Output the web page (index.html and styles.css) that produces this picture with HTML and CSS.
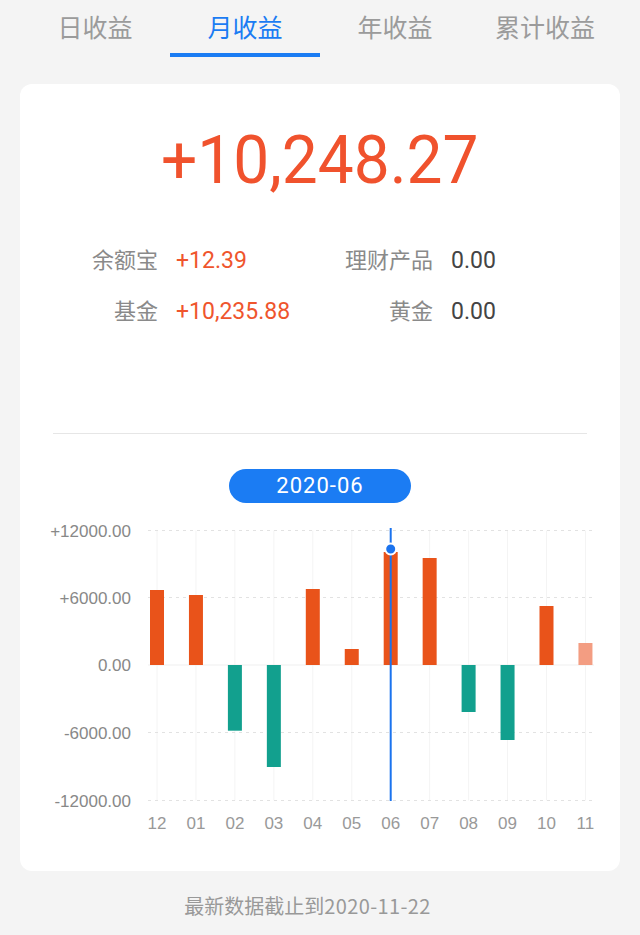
FILE: index.html
```html
<!DOCTYPE html>
<html lang="zh-CN">
<head>
<meta charset="utf-8">
<title>收益</title>
<link rel="stylesheet" href="styles.css">
</head>
<body>
<nav class="tabs">
  <div class="tab">日收益</div>
  <div class="tab active">月收益</div>
  <div class="tab">年收益</div>
  <div class="tab">累计收益</div>
</nav>
<main class="card">
  <div class="total"><span class="total-num">+10,248.27</span></div>
  <div class="details">
    <span class="label">余额宝</span><span class="value up">+12.39</span>
    <span class="label">理财产品</span><span class="value">0.00</span>
    <span class="label">基金</span><span class="value up">+10,235.88</span>
    <span class="label">黄金</span><span class="value">0.00</span>
  </div>
  <div class="divider"></div>
  <div class="pill-wrap"><div class="pill">2020-06</div></div>
  <svg class="chart" width="600" height="320" viewBox="0 0 600 320">
    <g class="vgrid">
      <line x1="137" y1="15.5" x2="137" y2="285.5"/>
      <line x1="175.95" y1="15.5" x2="175.95" y2="285.5"/>
      <line x1="214.9" y1="15.5" x2="214.9" y2="285.5"/>
      <line x1="253.85" y1="15.5" x2="253.85" y2="285.5"/>
      <line x1="292.8" y1="15.5" x2="292.8" y2="285.5"/>
      <line x1="331.75" y1="15.5" x2="331.75" y2="285.5"/>
      <line x1="409.65" y1="15.5" x2="409.65" y2="285.5"/>
      <line x1="448.6" y1="15.5" x2="448.6" y2="285.5"/>
      <line x1="487.55" y1="15.5" x2="487.55" y2="285.5"/>
      <line x1="526.5" y1="15.5" x2="526.5" y2="285.5"/>
      <line x1="565.45" y1="15.5" x2="565.45" y2="285.5"/>
    </g>
    <g class="hgrid">
      <line x1="128" y1="15.5" x2="574" y2="15.5"/>
      <line x1="128" y1="82.5" x2="574" y2="82.5"/>
      <line x1="128" y1="217.5" x2="574" y2="217.5"/>
      <line x1="128" y1="285.5" x2="574" y2="285.5"/>
    </g>
    <line class="zero" x1="128" y1="150" x2="574" y2="150"/>
    <g class="ylabels">
      <text x="111" y="21.5">+12000.00</text>
      <text x="111" y="88.5">+6000.00</text>
      <text x="111" y="156">0.00</text>
      <text x="111" y="223.5">-6000.00</text>
      <text x="111" y="291.5">-12000.00</text>
    </g>
    <g class="bars">
      <rect class="pos" x="130" y="75" width="14" height="75"/>
      <rect class="pos" x="168.95" y="80" width="14" height="70"/>
      <rect class="neg" x="207.9" y="150" width="14" height="65.7"/>
      <rect class="neg" x="246.85" y="150" width="14" height="102"/>
      <rect class="pos" x="285.8" y="74" width="14" height="76"/>
      <rect class="pos" x="324.75" y="134" width="14" height="16"/>
      <rect class="pos" x="363.7" y="37" width="14" height="113"/>
      <rect class="pos" x="402.65" y="43" width="14" height="107"/>
      <rect class="neg" x="441.6" y="150" width="14" height="47"/>
      <rect class="neg" x="480.55" y="150" width="14" height="75"/>
      <rect class="pos" x="519.5" y="91" width="14" height="59"/>
      <rect class="future" x="558.45" y="128" width="14" height="22"/>
    </g>
    <line class="cursor" x1="370.7" y1="13" x2="370.7" y2="286"/>
    <circle class="cursor-dot" cx="370.7" cy="34" r="5.5"/>
    <g class="xlabels">
      <text x="137" y="314">12</text>
      <text x="175.95" y="314">01</text>
      <text x="214.9" y="314">02</text>
      <text x="253.85" y="314">03</text>
      <text x="292.8" y="314">04</text>
      <text x="331.75" y="314">05</text>
      <text x="370.7" y="314">06</text>
      <text x="409.65" y="314">07</text>
      <text x="448.6" y="314">08</text>
      <text x="487.55" y="314">09</text>
      <text x="526.5" y="314">10</text>
      <text x="565.45" y="314">11</text>
    </g>
  </svg>
</main>
<footer class="footer">最新数据截止到<span class="footer-date">2020-11-22</span></footer>
</body>
</html>
```
FILE: styles.css
```css
* { box-sizing: border-box; }
html, body {
  margin: 0;
  padding: 0;
}
body {
  width: 640px;
  height: 935px;
  background: #f4f4f4;
  font-family: "Noto Sans CJK SC", "Noto Sans", sans-serif;
  overflow: hidden;
}
.tabs {
  display: flex;
  padding: 0 20px;
  margin-bottom: 27px;
}
.tab {
  width: 150px;
  height: 57px;
  display: flex;
  flex-direction: column;
  align-items: center;
  padding-top: 13px;
  font-size: 25px;
  line-height: 27px;
  color: #9b9b9b;
}
.tab::after {
  content: "";
  margin-top: auto;
  width: 100%;
  height: 4px;
  background: transparent;
}
.tab.active { color: #1b7cf3; }
.tab.active::after { background: #1b7cf3; }

.card {
  margin: 0 20px;
  height: 787px;
  background: #fff;
  border-radius: 12px;
  padding-top: 44px;
}
.total {
  height: 66px;
  text-align: center;
  font-family: Roboto, "Liberation Sans", sans-serif;
  font-size: 66px;
  line-height: 66px;
  color: #f0522d;
}
.total-num {
  display: inline-block;
  transform: scaleX(0.97);
}
.details {
  margin-top: 48px;
  display: grid;
  grid-template-columns: 138px 130px 109px auto;
  column-gap: 18px;
  row-gap: 16px;
  align-items: baseline;
  line-height: 32px;
}
.label {
  text-align: right;
  font-size: 22px;
  color: #8a8a8a;
}
.value {
  font-family: Roboto, "Liberation Sans", sans-serif;
  font-size: 23px;
  color: #444;
}
.value.up { color: #ef552d; }

.divider {
  margin: 105px 33px 0;
  height: 1px;
  background: #e6e6e6;
}
.pill-wrap {
  margin-top: 35px;
  display: flex;
  justify-content: center;
}
.pill {
  width: 182px;
  height: 34px;
  border-radius: 17px;
  background: #1b7cf3;
  color: #fff;
  font-family: Roboto, "Liberation Sans", sans-serif;
  font-size: 22px;
  letter-spacing: 1px;
  line-height: 34px;
  text-align: center;
}
.chart {
  display: block;
  margin-top: 12px;
}
.vgrid line { stroke: #f4f4f4; stroke-width: 1; }
.hgrid line { stroke: #e2e2e2; stroke-width: 1; stroke-dasharray: 3 4; }
.zero { stroke: #efefef; stroke-width: 1; }
.ylabels text {
  font-family: "Liberation Sans", Arial, sans-serif;
  font-size: 17px;
  fill: #888;
  text-anchor: end;
}
.xlabels text {
  font-family: "Liberation Sans", Arial, sans-serif;
  font-size: 17px;
  fill: #999;
  text-anchor: middle;
}
.bars .pos { fill: #e9531a; }
.bars .neg { fill: #12a08e; }
.bars .future { fill: #f39d82; }
.cursor { stroke: #1b73ee; stroke-width: 2; }
.cursor-dot { fill: #1b73ee; stroke: #fff; stroke-width: 2; }

.footer {
  margin-top: 20px;
  padding-right: 25px;
  text-align: center;
  font-size: 20px;
  line-height: 30px;
  color: #999;
}
.footer-date { letter-spacing: 0.4px; }
```
